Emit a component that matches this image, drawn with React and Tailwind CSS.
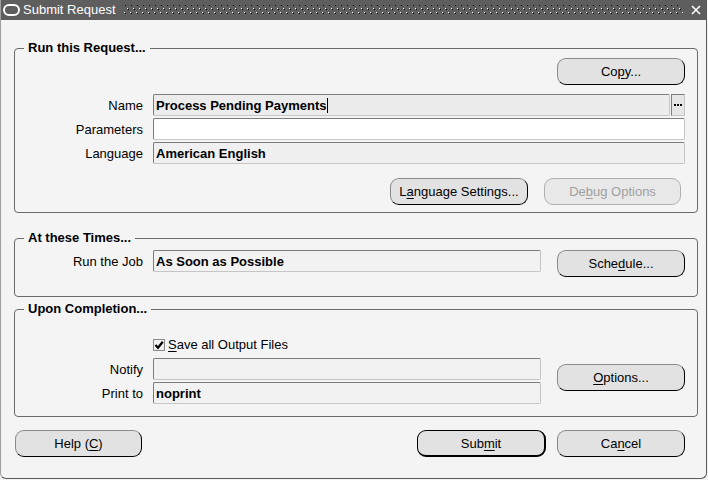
import React from 'react';

const U = ({ children }) => <span className="underline underline-offset-2">{children}</span>;

const Button = ({ children, width, disabled, primary }) => {
  let cls = 'h-[27px] rounded-[9px] flex items-center justify-center bg-[#e2e2e2] text-[13px] leading-[15px] ';
  if (disabled) cls += 'border border-[#b0b0b0] text-[#a0a0a0] bg-[#e8e8e8]';
  else if (primary) cls += 'border border-black border-r-2 border-b-2 text-black';
  else cls += 'border border-t-[#8a8a8a] border-l-[#8a8a8a] border-r-black border-b-black text-black';
  return (
    <div className={cls} style={{ width }}>
      {children}
    </div>
  );
};

const Field = ({ children, width, bg = 'bg-[#f2f2f2]' }) => (
  <div
    className={`h-[22px] ${bg} border border-t-[#7c7c7c] border-l-[#7c7c7c] border-r-[#c6c6c6] border-b-[#c6c6c6] rounded-[2px] flex items-center pl-[2px] font-bold text-[13px] leading-[15px] text-black`}
    style={{ width }}
  >
    {children}
  </div>
);

const Row = ({ label, children }) => (
  <div className="flex items-center">
    <div className="w-[128px] mr-[10px] text-right text-[13px] leading-[15px] text-black">{label}</div>
    {children}
  </div>
);

const Group = ({ title, children, className = '' }) => (
  <fieldset className={`border border-[#6a6a6a] rounded-[4px] w-[684px] ${className}`}>
    <legend className="ml-[9px] px-[4px] font-bold text-[13px] leading-[14px] text-black">{title}</legend>
    {children}
  </fieldset>
);

const TitleBar = () => (
  <div className="h-[20px] bg-[#5e5e5e] flex items-center text-white">
    <svg width="17" height="12" viewBox="0 0 17 12" className="ml-[2px]">
      <rect x="1" y="1" width="15" height="10" rx="5" fill="none" stroke="white" strokeWidth="2" />
    </svg>
    <span className="ml-[3px] text-[13px] leading-[14px]">Submit Request</span>
    <svg className="ml-[8px] mr-[8px] flex-1 h-[12px]">
      <defs>
        <pattern id="dots" width="6" height="8" patternUnits="userSpaceOnUse">
          <rect x="0" y="0" width="1" height="1" fill="#ffffff" />
          <rect x="1" y="1" width="1" height="1" fill="#000000" />
          <rect x="3" y="4" width="1" height="1" fill="#ffffff" />
          <rect x="4" y="5" width="1" height="1" fill="#000000" />
        </pattern>
      </defs>
      <rect x="0" y="1" width="100%" height="11" fill="url(#dots)" />
    </svg>
    <svg width="10" height="10" viewBox="0 0 10 10" className="mr-[5px]">
      <path d="M1 1 L9 9 M9 1 L1 9" stroke="white" strokeWidth="1.6" />
    </svg>
  </div>
);

export default function App() {
  return (
    <div className="w-[708px] h-[480px] bg-[#f4f4f4] overflow-hidden font-['Liberation_Sans',Arial,sans-serif] text-[13px] text-black">
      <div className="w-[707px] h-[479px] border-l border-l-[#a0a0a0] border-r border-b border-r-[#5a5a5a] border-b-[#5a5a5a] rounded-b-[6px] flex flex-col">
        <TitleBar />
        <div className="pl-[13px] pr-[8px] pt-[21px]">
          <Group title="Run this Request..." className="pb-[7px]">
            <div className="flex justify-end pr-[12px] mt-[3px]">
              <Button width={128}>
                Co<U>p</U>y...
              </Button>
            </div>
            <div className="mt-[9px]">
              <Row label="Name">
                <Field width={517} bg="bg-[#ececec]">
                  Process Pending Payments
                  <span className="inline-block w-px h-[15px] bg-black" />
                </Field>
                <div className="ml-[1px] w-[14px] h-[22px] border border-t-[#7c7c7c] border-l-[#7c7c7c] border-r-[#c6c6c6] border-b-[#c6c6c6] bg-[#e6e6e6] flex items-center justify-center">
                  <svg width="8" height="2" viewBox="0 0 8 2">
                    <rect x="0" y="0" width="2" height="2" fill="black" />
                    <rect x="3" y="0" width="2" height="2" fill="black" />
                    <rect x="6" y="0" width="2" height="2" fill="black" />
                  </svg>
                </div>
              </Row>
            </div>
            <div className="mt-[2px]">
              <Row label="Parameters">
                <Field width={532} bg="bg-white" />
              </Row>
            </div>
            <div className="mt-[2px]">
              <Row label="Language">
                <Field width={532} bg="bg-[#f0f0f0]">American English</Field>
              </Row>
            </div>
            <div className="flex justify-end gap-[16px] pr-[16px] mt-[14px]">
              <Button width={138}>
                L<U>a</U>nguage Settings...
              </Button>
              <Button width={137} disabled>
                De<U>b</U>ug Options
              </Button>
            </div>
          </Group>

          <Group title="At these Times..." className="mt-[18px] pb-[19px]">
            <div className="flex items-start mt-[5px]">
              <Row label="Run the Job">
                <Field width={388}>As Soon as Possible</Field>
              </Row>
              <div className="ml-[16px]">
                <Button width={128}>
                  Sche<U>d</U>ule...
                </Button>
              </div>
            </div>
          </Group>

          <Group title="Upon Completion..." className="mt-[5px] pb-[12px]">
            <div className="flex items-center ml-[138px] mt-[22px] h-[14px]">
              <svg width="12" height="12" viewBox="0 0 12 12">
                <rect x="0.5" y="0.5" width="11" height="11" fill="#efefef" stroke="#8a8a8a" />
                <path d="M2.5 6 L5 8.8 L9.8 2.8" fill="none" stroke="black" strokeWidth="2.2" />
              </svg>
              <span className="ml-[3px]">
                <U>S</U>ave all Output Files
              </span>
            </div>
            <div className="flex items-start mt-[6px]">
              <div className="flex flex-col gap-[2px]">
                <Row label="Notify">
                  <Field width={388} />
                </Row>
                <Row label="Print to">
                  <Field width={388}>noprint</Field>
                </Row>
              </div>
              <div className="ml-[16px] mt-[6px]">
                <Button width={128}>
                  <U>O</U>ptions...
                </Button>
              </div>
            </div>
          </Group>

          <div className="flex items-center mt-[13px] pl-[1px]">
            <Button width={127}>
              Help (<U>C</U>)
            </Button>
            <div className="ml-[275px]">
              <Button width={129} primary>
                Sub<U>m</U>it
              </Button>
            </div>
            <div className="ml-[11px]">
              <Button width={128}>
                Ca<U>n</U>cel
              </Button>
            </div>
          </div>
        </div>
      </div>
    </div>
  );
}
